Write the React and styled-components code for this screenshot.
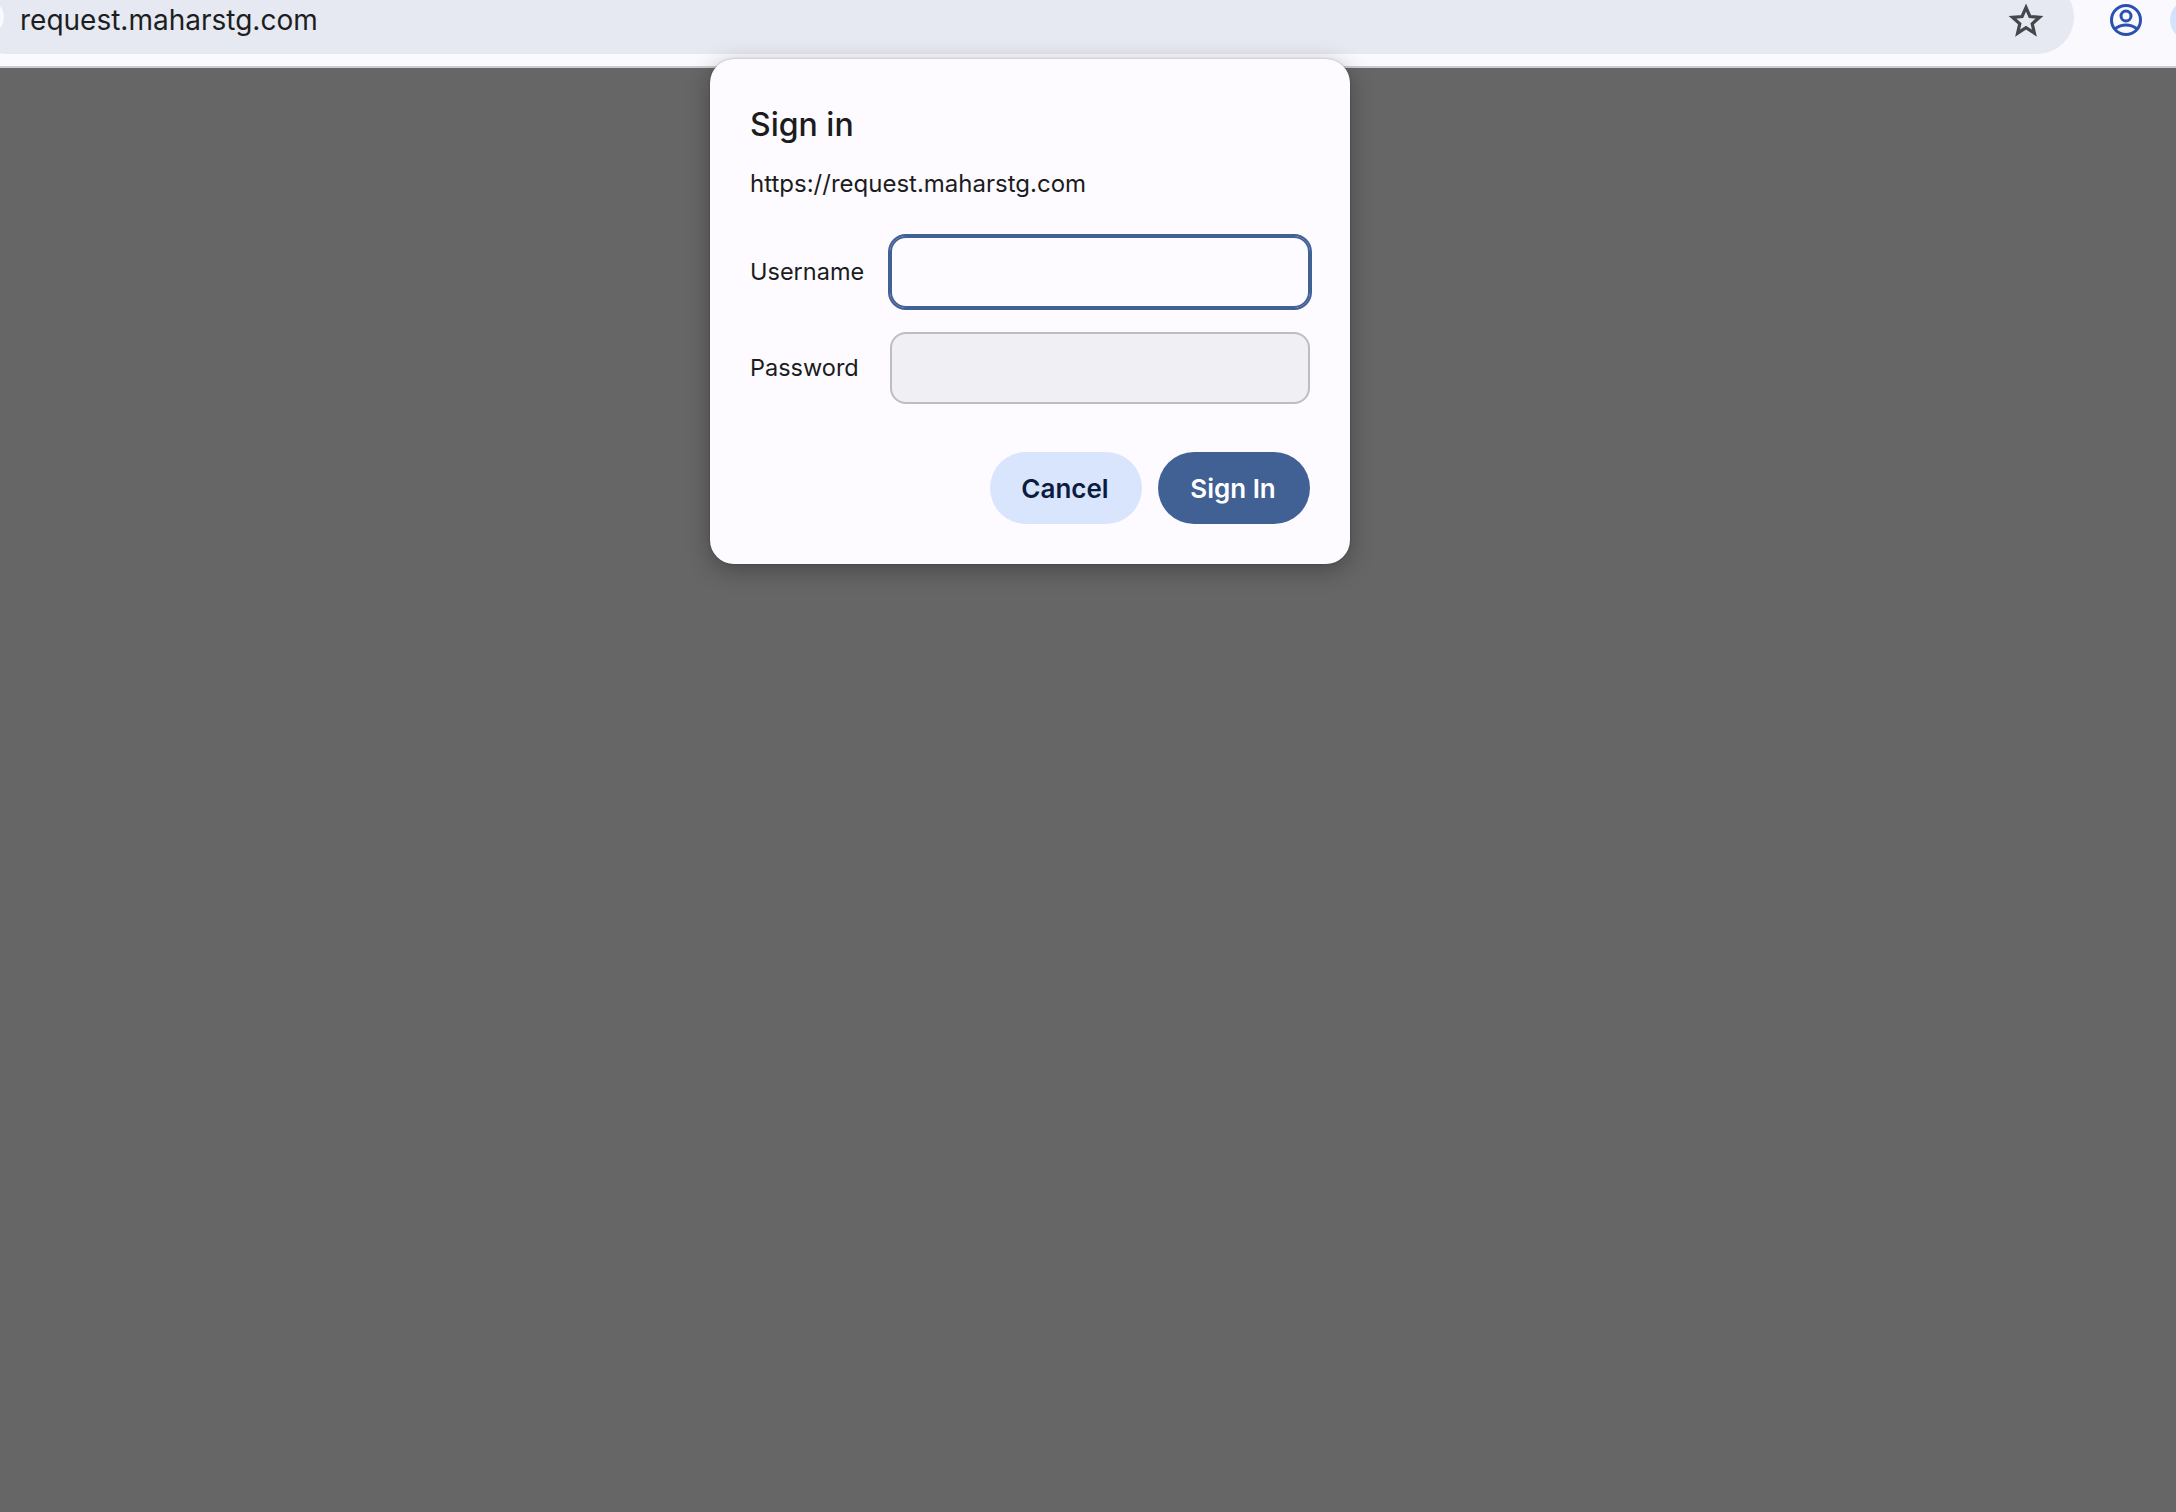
import styled, { createGlobalStyle } from 'styled-components';

const GlobalStyle = createGlobalStyle`
    html, body {
        margin: 0;
        height: 100%;
        background: #666666;
        font-family: Inter, "Liberation Sans", sans-serif;
    }
    * {
        box-sizing: border-box;
    }
`;

const Page = styled.div`
    width: 2176px;
    height: 1512px;
    position: relative;
    overflow: hidden;
    display: flex;
    flex-direction: column;
`;

const Toolbar = styled.header`
    height: 68px;
    flex: none;
    display: flex;
    align-items: flex-start;
    overflow: hidden;
    background: #f9f9fe;
    border-bottom: 2px solid #c9ccd2;
`;

const Omnibox = styled.div`
    width: 2104px;
    height: 74px;
    margin: -20px 0 0 -30px;
    padding: 0 30px 0 30px;
    flex: none;
    display: flex;
    align-items: center;
    justify-content: space-between;
    border-radius: 37px;
    background: #e6e9f2;
`;

const SiteChip = styled.span`
    width: 34px;
    height: 34px;
    margin-left: -30px;
    flex: none;
    border-radius: 50%;
    background: #f9f9fe;
`;

const UrlText = styled.span`
    flex: 1;
    margin-left: 16px;
    padding-top: 6px;
    font-size: 28px;
    color: #1d1e21;
`;

const StarIcon = styled.svg`
    width: 36px;
    height: 36px;
    margin-top: 5px;
    flex: none;
    color: #45474c;
`;

const ProfileIcon = styled.svg`
    width: 38px;
    height: 38px;
    margin: 1px 0 0 33px;
    flex: none;
    color: #2a50b0;
`;

const AvatarPill = styled.span`
    width: 40px;
    height: 40px;
    margin-left: 25px;
    flex: none;
    border-radius: 50%;
    background: #d3e3fd;
`;

const Backdrop = styled.main`
    flex: 1;
    background: #666666;
`;

const Dialog = styled.form`
    position: absolute;
    top: 59px;
    left: 710px;
    width: 640px;
    height: 505px;
    padding: 40px;
    display: flex;
    flex-direction: column;
    border-radius: 24px;
    background: #fdfbff;
    box-shadow: 0 0 2px rgba(0, 0, 0, 0.3), 0 6px 24px rgba(0, 0, 0, 0.3);
`;

const Title = styled.h1`
    margin: 0;
    font-size: 32px;
    line-height: 52px;
    font-weight: 500;
    color: #1b1c20;
`;

const Origin = styled.p`
    margin: 15px 0 0;
    font-size: 24px;
    line-height: 36px;
    color: #1b1c20;
`;

const Fields = styled.div`
    margin-top: 34px;
    display: flex;
    flex-direction: column;
    gap: 24px;
`;

const FieldRow = styled.div`
    display: grid;
    grid-template-columns: 140px 420px;
    align-items: center;
`;

const FieldLabel = styled.label`
    margin-bottom: 2px;
    font-size: 23.5px;
    color: #1b1c20;
`;

const FieldInput = styled.input`
    height: 72px;
    padding: 0 16px;
    border: 2px solid ${({ $focused }) => ($focused ? '#416094' : '#bcbdc2')};
    border-radius: 16px;
    outline: ${({ $focused }) => ($focused ? '2px solid #416094' : 'none')};
    background: ${({ $focused }) => ($focused ? '#fdfbff' : '#f0eff3')};
`;

const Actions = styled.div`
    margin-top: 48px;
    display: flex;
    justify-content: flex-end;
    gap: 16px;
`;

const ActionButton = styled.button`
    width: 152px;
    height: 72px;
    padding: 0 2px 0 0;
    border: none;
    border-radius: 36px;
    font-family: inherit;
    font-size: 26px;
    font-weight: 600;
    color: ${({ $primary }) => ($primary ? '#ffffff' : '#0b1c3f')};
    background: ${({ $primary }) => ($primary ? '#416094' : '#d8e5fc')};
`;

const App = () => {
    return (
        <>
            <GlobalStyle />
            <Page>
                <Toolbar>
                    <Omnibox>
                        <SiteChip />
                        <UrlText>request.maharstg.com</UrlText>
                        <StarIcon viewBox="0 0 36 36" fill="none" stroke="currentColor" strokeWidth="3.2">
                            <path d="M18 5.5l3.9 9 9.6.8-7.3 6.4 2.2 9.5L18 25.7l-8.4 5.5 2.2-9.5-7.3-6.4 9.6-.8z" strokeLinejoin="miter" />
                        </StarIcon>
                    </Omnibox>
                    <ProfileIcon viewBox="0 0 38 38" fill="none" stroke="currentColor" strokeWidth="3">
                        <circle cx="19" cy="19" r="14.5" />
                        <circle cx="19" cy="15" r="5" />
                        <path d="M8.5 27.5c6-4.8 15-4.8 21 0" />
                    </ProfileIcon>
                    <AvatarPill />
                </Toolbar>
                <Backdrop />
                <Dialog>
                    <Title>Sign in</Title>
                    <Origin>https://request.maharstg.com</Origin>
                    <Fields>
                        <FieldRow>
                            <FieldLabel htmlFor="username">Username</FieldLabel>
                            <FieldInput id="username" type="text" $focused />
                        </FieldRow>
                        <FieldRow>
                            <FieldLabel htmlFor="password">Password</FieldLabel>
                            <FieldInput id="password" type="password" />
                        </FieldRow>
                    </Fields>
                    <Actions>
                        <ActionButton type="button">Cancel</ActionButton>
                        <ActionButton type="button" $primary>Sign In</ActionButton>
                    </Actions>
                </Dialog>
            </Page>
        </>
    );
};

export default App;
